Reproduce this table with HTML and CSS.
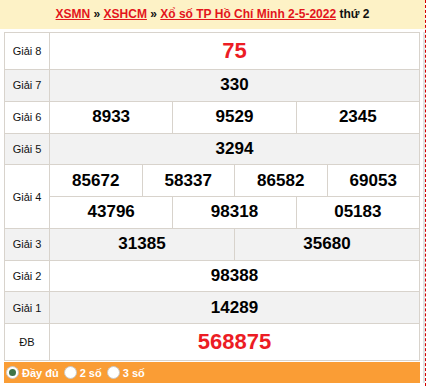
FILE: index.html
```html
<!DOCTYPE html>
<html lang="vi">
<head>
<meta charset="utf-8">
<title>XSHCM 2-5-2022</title>
<link rel="stylesheet" href="styles.css">
</head>
<body>
<div class="page">
  <div class="title">
    <a href="#">XSMN</a> » <a href="#">XSHCM</a> » <a href="#">Xổ số TP Hồ Chí Minh 2-5-2022</a> thứ 2
  </div>
  <div class="content">
    <div class="main">
      <div class="results">
        <div class="row big">
          <div class="label">Giải 8</div>
          <div class="vals c1"><span class="num red">75</span></div>
        </div>
        <div class="row alt">
          <div class="label">Giải 7</div>
          <div class="vals c1"><span class="num">330</span></div>
        </div>
        <div class="row">
          <div class="label">Giải 6</div>
          <div class="vals c3"><span class="num">8933</span><span class="num">9529</span><span class="num">2345</span></div>
        </div>
        <div class="row alt">
          <div class="label">Giải 5</div>
          <div class="vals c1"><span class="num">3294</span></div>
        </div>
        <div class="row double">
          <div class="label">Giải 4</div>
          <div class="stack">
            <div class="vals c4"><span class="num">85672</span><span class="num">58337</span><span class="num">86582</span><span class="num">69053</span></div>
            <div class="vals c3"><span class="num">43796</span><span class="num">98318</span><span class="num">05183</span></div>
          </div>
        </div>
        <div class="row alt">
          <div class="label">Giải 3</div>
          <div class="vals c2"><span class="num">31385</span><span class="num">35680</span></div>
        </div>
        <div class="row">
          <div class="label">Giải 2</div>
          <div class="vals c1"><span class="num">98388</span></div>
        </div>
        <div class="row alt">
          <div class="label">Giải 1</div>
          <div class="vals c1"><span class="num">14289</span></div>
        </div>
        <div class="row big">
          <div class="label">ĐB</div>
          <div class="vals c1"><span class="num red">568875</span></div>
        </div>
      </div>
      <div class="options">
        <label class="opt"><span class="radio on"></span>Đầy đủ</label>
        <label class="opt"><span class="radio"></span>2 số</label>
        <label class="opt"><span class="radio"></span>3 số</label>
      </div>
    </div>
    <div class="strip"></div>
  </div>
</div>
</body>
</html>
```
FILE: styles.css
```css
* { box-sizing: border-box; }
html, body { margin: 0; padding: 0; background: #fff; }
body { font-family: "Liberation Sans", Arial, sans-serif; color: #000; }

.page {
  width: 426px;
  min-height: 386px;
  border-right: 1px dashed #d40000;
}

.title {
  height: 29px;
  background: #fdf2c6;
  text-align: center;
  font-size: 12px;
  font-weight: bold;
  line-height: 29px;
  color: #111;
  margin-bottom: 3px;
}
.title a { color: #e3151c; text-decoration: underline; }

.content { display: flex; }
.main { padding-left: 4px; width: 420px; }
.strip { margin-left: 3px; width: 2px; background: #e2e2e2; }

.results {
  width: 416px;
  border-top: 1px solid #d8d3cc;
  border-left: 1px solid #d8d3cc;
}
.row {
  display: grid;
  grid-template-columns: 45px 370px;
  height: 31.75px;
}
.row.big { height: 37px; }
.row.double { height: 63.5px; }
.row.alt { background: #f2f2f2; }

.label {
  border-right: 1px solid #d8d3cc;
  border-bottom: 1px solid #d8d3cc;
  display: flex;
  align-items: center;
  justify-content: center;
  font-size: 11px;
  color: #111;
}
.stack { display: grid; grid-template-rows: 1fr 1fr; }
.vals { display: grid; }
.vals.c1 { grid-template-columns: 1fr; }
.vals.c2 { grid-template-columns: 1fr 1fr; }
.vals.c3 { grid-template-columns: 1fr 1fr 1fr; }
.vals.c4 { grid-template-columns: 1fr 1fr 1fr 1fr; }

.num {
  border-right: 1px solid #d8d3cc;
  border-bottom: 1px solid #d8d3cc;
  display: flex;
  align-items: center;
  justify-content: center;
  font-size: 17px;
  font-weight: bold;
  color: #000;
}
.num.red { color: #ec1c24; font-size: 22px; }

.options {
  width: 416px;
  height: 21px;
  margin-top: 1px;
  background: #fa9d35;
  display: flex;
  align-items: center;
  gap: 5px;
  padding-left: 2px;
}
.opt {
  display: flex;
  align-items: center;
  gap: 3px;
  color: #fff;
  font-size: 11px;
  font-weight: bold;
}
.radio {
  width: 13px;
  height: 13px;
  border-radius: 50%;
  background: #fff;
  border: 1px solid #c8c8c8;
  display: flex;
  align-items: center;
  justify-content: center;
}
.radio.on::after {
  content: "";
  width: 7px;
  height: 7px;
  border-radius: 50%;
  background: #3e7446;
}
```
